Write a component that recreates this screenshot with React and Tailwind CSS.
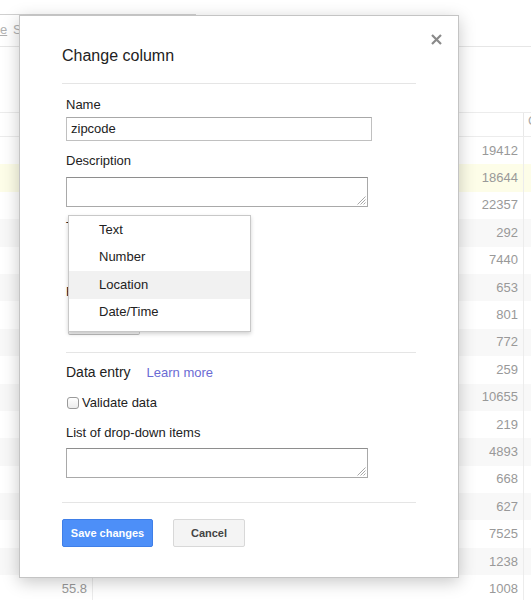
import React from "react";

const nums = [19412, 18644, 22357, 292, 7440, 653, 801, 772, 259, 10655, 219, 4893, 668, 627, 7525, 1238, 1008];

function Grip() {
  return (
    <svg className="absolute right-[1px] bottom-[1px]" width="9" height="9" viewBox="0 0 9 9">
      <line x1="8.5" y1="0.5" x2="0.5" y2="8.5" stroke="#a8a8a8" strokeWidth="1" />
      <line x1="8.5" y1="3.5" x2="3.5" y2="8.5" stroke="#a8a8a8" strokeWidth="1" />
      <line x1="8.5" y1="6.5" x2="6.5" y2="8.5" stroke="#a8a8a8" strokeWidth="1" />
    </svg>
  );
}

export default function App() {
  return (
    <div className="relative w-[531px] h-[600px] overflow-hidden bg-white font-['Liberation_Sans',Arial,sans-serif] text-[13px] leading-[16px] text-[#222]">
      {/* background page */}
      <div className="h-[47px] border-b border-[#e6e6e6]">
        <div className="w-[196px] h-[15px] border-b border-[#d0d0d0]" />
        <div className="flex items-center h-[16px] mt-[7px] text-[#b0b0b0]">
          <span className="underline w-[12px]">e</span>
          <span className="ml-[1px]">S</span>
        </div>
      </div>
      <div className="mt-[65px] flex h-[25px] border-t border-b border-[#ececec]">
        <div className="w-[93px]" />
        <div className="flex-1" />
        <div className="w-[8px] border-l border-[#e8e8e8] pl-[4px] text-[#aaa] overflow-hidden">C</div>
      </div>
      {nums.map((n, i) => (
        <div
          key={i}
          className={
            "flex h-[27.4px] items-center " +
            (i === 1 ? "bg-[#fdfde8]" : i % 2 === 1 ? "bg-[#f8f8f8]" : "bg-white")
          }
        >
          <div className="w-[93px] h-full flex items-center justify-end pr-[5px] border-r border-[#ececec] text-[#999]">
            {i === nums.length - 1 ? "55.8" : ""}
          </div>
          <div className="flex-1 h-full flex items-center justify-end pr-[5px] text-[#999]">{n}</div>
          <div className="w-[8px] h-full border-l border-[#ececec]" />
        </div>
      ))}

      {/* dialog */}
      <div className="absolute left-[19px] top-[15px] w-[440px] h-[563px] bg-white border border-[#c4c4c4] shadow-[0_4px_16px_rgba(0,0,0,0.22)]">
        <button className="absolute right-[16px] top-[17px] w-[12px] h-[12px] flex items-center justify-center">
          <svg width="11" height="11" viewBox="0 0 11 11">
            <path d="M1 1 L10 10 M10 1 L1 10" stroke="#8a8a8a" strokeWidth="2.2" strokeLinecap="butt" />
          </svg>
        </button>

        <div className="ml-[42px] w-[354px] flex flex-col">
          <div className="mt-[30px] text-[16px] leading-[20px] text-[#222]">Change column</div>
          <div className="mt-[17px] h-px bg-[#e5e5e5]" />

          <div className="mt-[13px] ml-[4px] flex flex-col">
            <div>Name</div>
            <div className="mt-[4px] w-[306px] h-[24px] border border-[#c0c0c0] border-t-[#a8a8a8] flex items-center pl-[4px] text-[#222]">
              zipcode
            </div>
            <div className="mt-[12px]">Description</div>
            <div className="relative mt-[8px] w-[302px] h-[30px] border border-[#a9a9a9] border-t-[#8e8e8e]">
              <Grip />
            </div>
            <div className="mt-[12px]">Type</div>
            <div className="mt-[4px] ml-[2px] w-[72px] h-[24px]" />
            <div className="mt-[21px]">Format</div>
            <div className="mt-[8px] ml-[2px] w-[72px] h-[27px] border border-[#cfcfcf] border-b-[#bcbcbc] bg-[#f3f3f3] rounded-[2px]" />
          </div>

          <div className="mt-[17px] ml-[4px] h-px bg-[#e5e5e5]" />

          <div className="mt-[10px] ml-[4px] flex items-baseline">
            <span className="text-[14px] leading-[18px] text-[#222]">Data entry</span>
            <span className="ml-[16px] text-[#6b6bd4]">Learn more</span>
          </div>

          <div className="mt-[14px] ml-[5px] flex items-center h-[16px]">
            <span className="w-[12px] h-[12px] rounded-[3px] border border-[#9a9a9a] bg-gradient-to-b from-white to-[#ececec]" />
            <span className="ml-[3px]">Validate data</span>
          </div>

          <div className="mt-[14px] ml-[4px]">List of drop-down items</div>
          <div className="relative mt-[7px] ml-[4px] w-[302px] h-[30px] border border-[#a9a9a9] border-t-[#8e8e8e]">
            <Grip />
          </div>

          <div className="mt-[24px] h-px bg-[#e5e5e5]" />

          <div className="mt-[16px] flex gap-[20px]">
            <button className="w-[91px] h-[28px] rounded-[2px] bg-[#4d8ff8] border border-[#3f7fe8] text-white text-[11px] font-bold">
              Save changes
            </button>
            <button className="w-[72px] h-[28px] rounded-[2px] bg-[#f4f4f4] border border-[#d8d8d8] text-[#444] text-[11px] font-bold">
              Cancel
            </button>
          </div>
        </div>

        {/* dropdown menu */}
        <div className="absolute left-[48px] top-[199px] w-[183px] h-[117px] bg-white border border-[#c8c8c8] shadow-[0_2px_4px_rgba(0,0,0,0.18)]">
          {["Text", "Number", "Location", "Date/Time"].map((t) => (
            <div
              key={t}
              className={
                "h-[27.5px] flex items-center pl-[30px] text-[#222] " + (t === "Location" ? "bg-[#f1f1f1]" : "")
              }
            >
              {t}
            </div>
          ))}
        </div>
      </div>
    </div>
  );
}
